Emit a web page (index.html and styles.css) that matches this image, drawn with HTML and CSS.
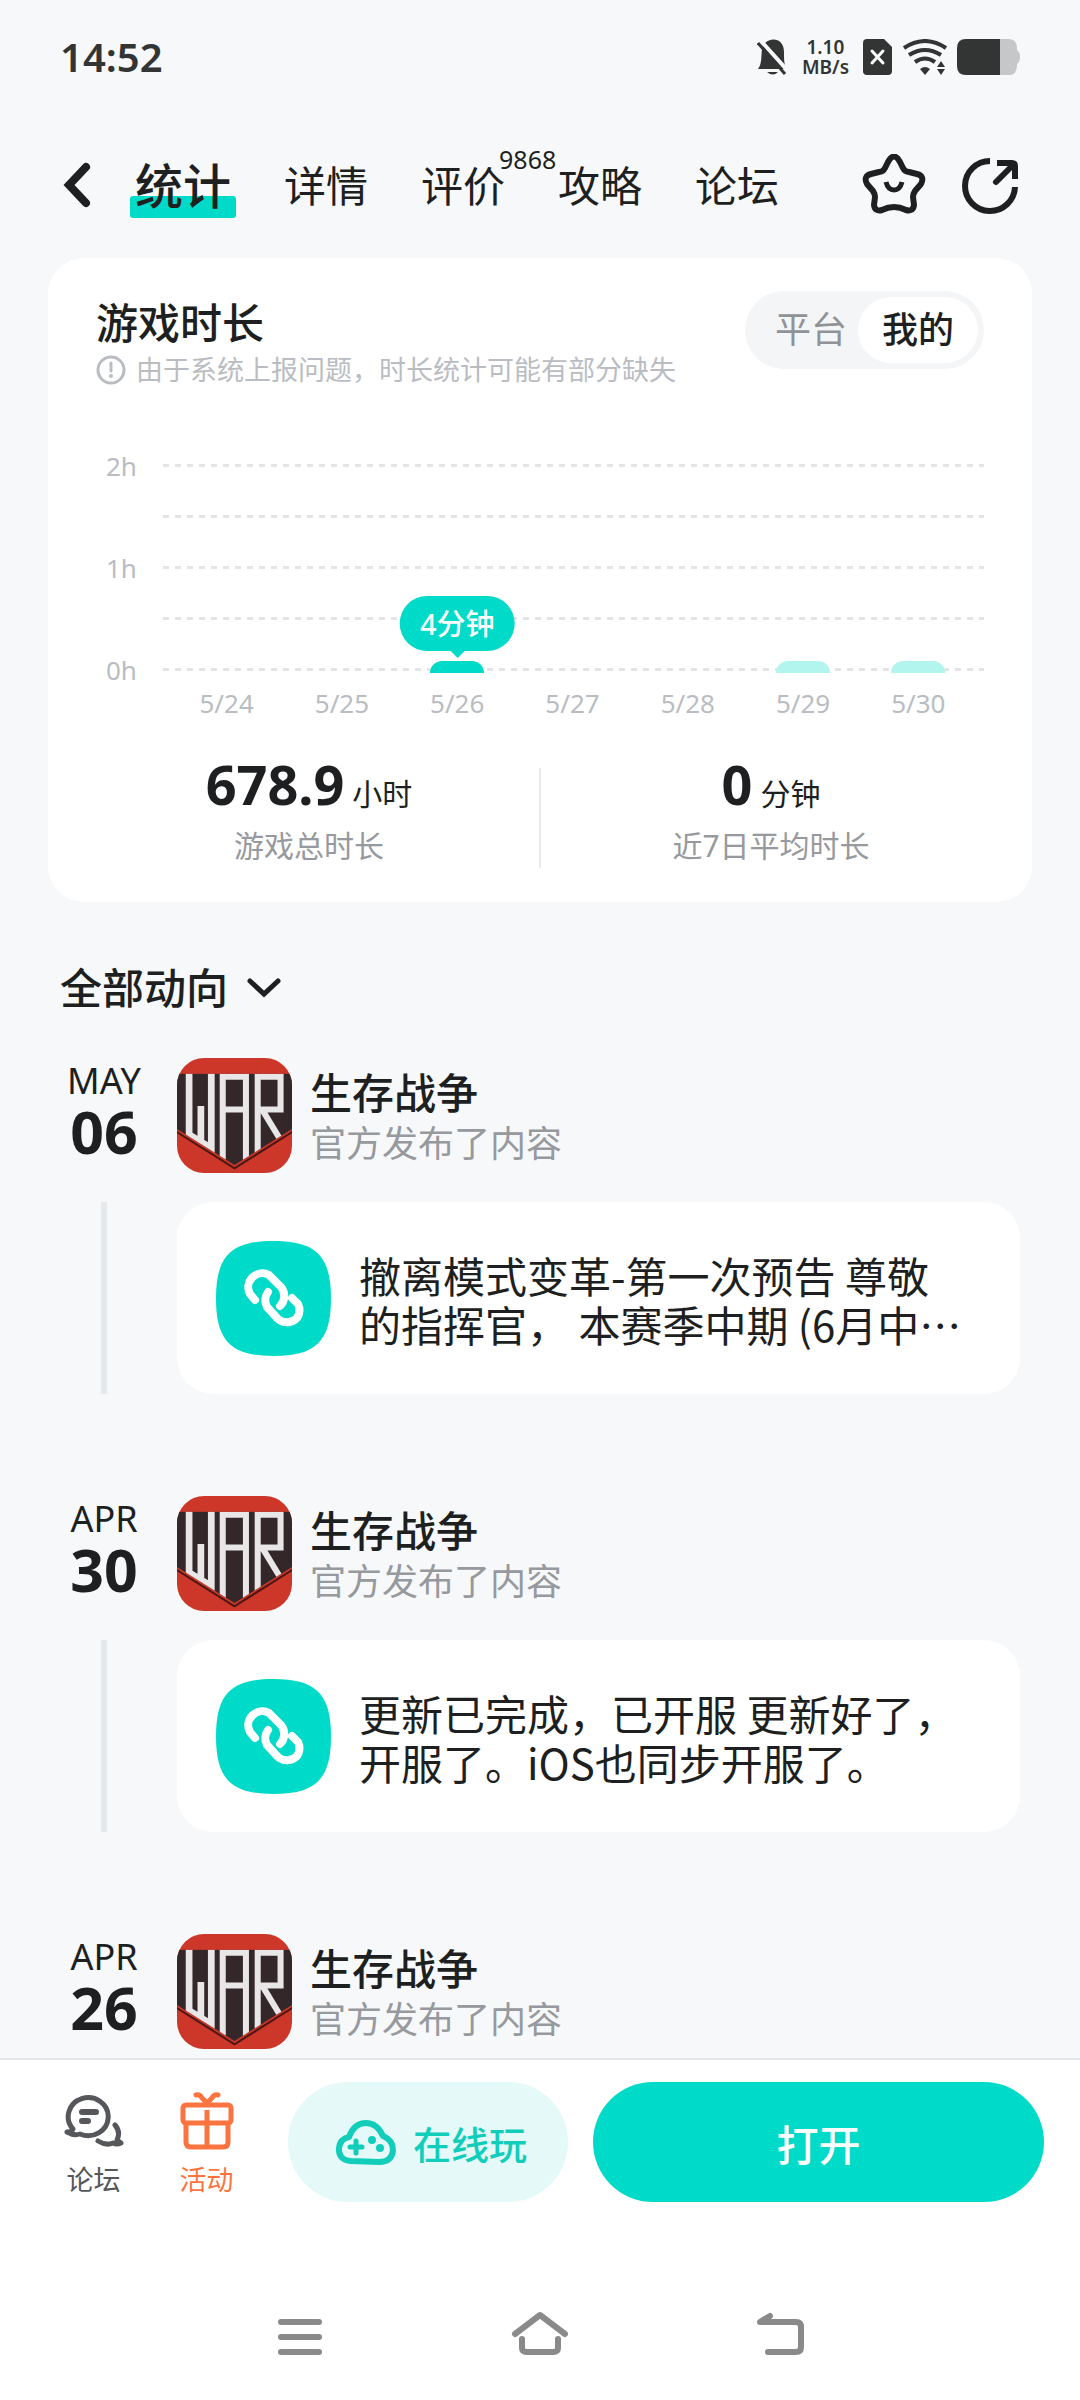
FILE: index.html
```html
<!DOCTYPE html>
<html lang="zh-CN">
<head>
<meta charset="utf-8">
<meta name="viewport" content="width=device-width, initial-scale=1">
<title>生存战争 - 统计</title>
<link rel="stylesheet" href="styles.css">
</head>
<body>
<svg class="sprite" aria-hidden="true">
  <symbol id="war" viewBox="0 0 342 342">
    <clipPath id="shield"><path d="M0 46H342V211L171 318L0 211Z"/></clipPath>
    <rect width="342" height="342" fill="#cc3729"/>
    <g clip-path="url(#shield)">
      <rect y="46" width="342" height="290" fill="#33272a"/>
      <g fill="none" stroke="#e8e6e6" stroke-width="18">
        <path d="M36 46V228L102 268V46M71 143V249" stroke-width="20"/>
        <path d="M136 340V56H205V340M136 153H205"/>
        <path d="M240 340V56H308V153H240M256 158L308 244"/>
      </g>
    </g>
    <path d="M-4 218L171 328L346 218" fill="none" stroke="#4a1714" stroke-width="6"/>
  </symbol>
  <symbol id="link" viewBox="0 0 115 115">
    <path d="M57.500 0C100 0 115 15 115 57.500S100 115 57.500 115S0 100 0 57.500S15 0 57.500 0Z" fill="#00dac8"/>
    <g fill="none" stroke="#fff" stroke-width="8" stroke-linecap="round" stroke-linejoin="round">
      <path d="M39 59L34 53A14 14 0 0 1 53 34L65 46A14 14 0 0 1 64 65"/>
      <path d="M52 51A14 14 0 0 0 51 66L62 78A14 14 0 0 0 81 77A14 14 0 0 0 82 63L76 57"/>
    </g>
  </symbol>
</svg>
<div class="app">
  <div class="status">
    <time class="clock">14:52</time>
    <div class="status-icons">
      <svg class="bell" viewBox="0 0 31 36"><path d="M8 4C14-2 27-1 27 13C27 22 27 25 30 30H1C5 25 4 18 5 10Z" fill="#333535"/><path d="M10 33H21Q16 38 10 33Z" fill="#333535"/><path d="M4 2L31 32" stroke="#f6f8fa" stroke-width="4"/><path d="M1 4L28 35" stroke="#333535" stroke-width="3"/></svg>
      <div class="speed"><span>1.10</span><span>MB/s</span></div>
      <svg class="sim" viewBox="0 0 29 36"><path d="M4 0H21L29 8V32Q29 36 25 36H4Q0 36 0 32V4Q0 0 4 0Z" fill="#333535"/><path d="M9 12L20 24M20 12L9 24" stroke="#fff" stroke-width="3" stroke-linecap="round"/></svg>
      <svg class="wifi" viewBox="0 0 44 36"><g fill="none" stroke="#333535" stroke-width="4"><path d="M1 9Q22-5 43 9"/><path d="M6 16Q22 6 38 16"/><path d="M12 23Q22 16 32 23"/></g><path d="M17 30Q22 26 27 30L22 36ZM34 28L38 22L42 28ZM34 30H42L38 36Z" fill="#333535"/></svg>
      <svg class="battery" viewBox="0 0 63 36"><path d="M43 0H52Q60 0 60 10V11Q63 13 63 18T60 25V26Q60 36 52 36H43Z" fill="#c6c7c9"/><path d="M9 0H43V36H9Q0 36 0 27V9Q0 0 9 0Z" fill="#333535"/></svg>
    </div>
  </div>

  <header class="topbar">
    <button class="icon-btn" type="button" aria-label="返回"><svg width="32" height="48" viewBox="0 0 32 48"><path d="M26 5L9 23L26 41" fill="none" stroke="#1d1f20" stroke-width="8" stroke-linecap="round"/></svg></button>
    <nav class="tabs">
      <a class="tab tab-active" href="#stats" aria-current="page">统计</a>
      <a class="tab" href="#details">详情</a>
      <a class="tab" href="#reviews">评价<sup class="count">9868</sup></a>
      <a class="tab" href="#guides">攻略</a>
      <a class="tab" href="#forum">论坛</a>
    </nav>
    <div class="tools">
      <button class="icon-btn" type="button" aria-label="收藏"><svg width="64" height="64" viewBox="0 0 64 64"><g fill="none" stroke="#1d1f20" stroke-width="6" stroke-linejoin="round"><path d="M26 8Q32-3 38 8L41 14Q43 18 47 18L55 20Q63 22 59 30L53 37Q51 40 51 43L52 51Q51 58 44 56Q32 50 20 56Q13 58 12 51L13 43Q13 40 11 37L5 30Q1 22 9 20L17 18Q21 18 23 14Z"/><path d="M24 28Q26 36 32 36T40 28" stroke-width="5"/></g></svg></button>
      <button class="icon-btn" type="button" aria-label="分享"><svg width="64" height="64" viewBox="0 0 64 64"><g fill="none" stroke="#1d1f20" stroke-width="6"><path d="M32 7A25 25 0 1 0 57 33"/><path d="M38 28L55 11" stroke-linecap="round"/><path d="M39 9H54Q57 9 57 12V25"/></g></svg></button>
    </div>
  </header>

  <main class="content">
    <section class="panel">
      <div class="panel-head">
        <div class="panel-title">
          <h1>游戏时长</h1>
          <p class="notice"><svg width="30" height="30" viewBox="0 0 30 30"><circle cx="15" cy="15" r="13" fill="none" stroke="#b9bdc2" stroke-width="3"/><path d="M15 8V16" stroke="#b9bdc2" stroke-width="3" stroke-linecap="round"/><circle cx="15" cy="21" r="2" fill="#b9bdc2"/></svg>由于系统上报问题，时长统计可能有部分缺失</p>
        </div>
        <div class="switch" role="group" aria-label="统计范围">
          <button type="button" aria-pressed="false">平台</button>
          <button type="button" aria-pressed="true">我的</button>
        </div>
      </div>

      <div class="chart">
        <div class="gridlines">
          <div class="gridline"><span>2h</span><i></i></div>
          <div class="gridline"><span></span><i></i></div>
          <div class="gridline"><span>1h</span><i></i></div>
          <div class="gridline"><span></span><i></i></div>
          <div class="gridline"><span>0h</span><i></i></div>
        </div>
        <ol class="days">
          <li>5/24</li>
          <li>5/25</li>
          <li><div class="bar bar-on"><span class="tip">4分钟</span></div>5/26</li>
          <li>5/27</li>
          <li>5/28</li>
          <li><div class="bar"></div>5/29</li>
          <li><div class="bar"></div>5/30</li>
        </ol>
      </div>

      <div class="totals">
        <div class="total"><p class="value"><strong>678.9</strong>小时</p><p class="label">游戏总时长</p></div>
        <div class="total"><p class="value"><strong>0</strong>分钟</p><p class="label">近7日平均时长</p></div>
      </div>
    </section>

    <button class="filter" type="button">全部动向<svg width="36" height="24" viewBox="0 0 36 24"><path d="M4 5L18 18L32 5" fill="none" stroke="#1d1f20" stroke-width="5" stroke-linecap="round"/></svg></button>

    <div class="timeline">
      <article class="entry">
        <time class="date">MAY<b>06</b></time>
        <div class="who">
          <svg class="game" role="img" aria-label="生存战争"><use href="#war"/></svg>
          <div class="who-text"><h2>生存战争</h2><p>官方发布了内容</p></div>
        </div>
        <div class="rail"></div>
        <a class="post" href="#post-0506"><svg class="badge" aria-hidden="true"><use href="#link"/></svg><p>撤离模式变革-第一次预告 尊敬的指挥官， 本赛季中期 (6月中…</p></a>
      </article>
      <article class="entry">
        <time class="date">APR<b>30</b></time>
        <div class="who">
          <svg class="game" role="img" aria-label="生存战争"><use href="#war"/></svg>
          <div class="who-text"><h2>生存战争</h2><p>官方发布了内容</p></div>
        </div>
        <div class="rail"></div>
        <a class="post" href="#post-0430"><svg class="badge" aria-hidden="true"><use href="#link"/></svg><p>更新已完成，已开服 更新好了，开服了。iOS也同步开服了。</p></a>
      </article>
      <article class="entry">
        <time class="date">APR<b>26</b></time>
        <div class="who">
          <svg class="game" role="img" aria-label="生存战争"><use href="#war"/></svg>
          <div class="who-text"><h2>生存战争</h2><p>官方发布了内容</p></div>
        </div>
      </article>
    </div>
  </main>

  <footer class="bottom">
    <div class="actions">
      <div class="shortcuts">
        <a class="shortcut" href="#forum"><svg width="60" height="60" viewBox="0 0 60 60"><g fill="none" stroke="#55575b" stroke-linecap="round" stroke-linejoin="round"><path d="M3 42Q8 42 9 39A20 19 0 1 1 16 44Q10 46 3 42Z" stroke-width="5"/><path d="M18 22H32M18 31H24" stroke-width="6"/><path d="M51 35Q57 42 53 50L57 53Q53 55 49 53Q42 56 34 51" stroke-width="5"/></g></svg>论坛</a>
        <a class="shortcut shortcut-hot" href="#events"><svg width="60" height="60" viewBox="0 0 60 60"><g fill="none" stroke="#fb7440" stroke-width="5" stroke-linejoin="round"><rect x="6" y="15" width="48" height="18" rx="3"/><path d="M9 33V52Q9 57 14 57H46Q51 57 51 52V33M30 20V57"/><path d="M19 5Q23 4 25 8L30 13L35 8Q37 4 41 5" stroke-linecap="round"/></g></svg>活动</a>
      </div>
      <button class="pill pill-soft" type="button"><svg width="62" height="48" viewBox="0 0 62 48"><path d="M16 43Q3 42 4 30Q5 21 14 19Q19 5 31 5Q42 5 48 18Q58 22 58 32Q57 44 44 44Z" fill="none" stroke="#12cdb9" stroke-width="6" stroke-linejoin="round"/><path d="M15 29H27M21 23V35" stroke="#12cdb9" stroke-width="5" stroke-linecap="round"/><circle cx="37" cy="22" r="4" fill="#12cdb9"/><circle cx="45" cy="30" r="4" fill="#12cdb9"/></svg>在线玩</button>
      <button class="pill pill-main" type="button">打开</button>
    </div>
    <nav class="sysnav">
      <button class="icon-btn" type="button" aria-label="最近任务"><svg width="60" height="60" viewBox="0 0 60 60"><path d="M11 17H49M11 32H49M11 47H49" stroke="#8a8a8a" stroke-width="6" stroke-linecap="round"/></svg></button>
      <button class="icon-btn" type="button" aria-label="主屏幕"><svg width="60" height="60" viewBox="0 0 60 60"><path d="M5 29L30 10L55 29M12 34V43Q12 47 17 47H43Q48 47 48 43V34" fill="none" stroke="#8a8a8a" stroke-width="6" stroke-linecap="round" stroke-linejoin="round"/></svg></button>
      <button class="icon-btn" type="button" aria-label="返回上一页"><svg width="60" height="60" viewBox="0 0 60 60"><path d="M18 47H46Q51 47 51 42V22Q51 17 46 17H10L20 11" fill="none" stroke="#8a8a8a" stroke-width="6" stroke-linecap="round" stroke-linejoin="round"/></svg></button>
    </nav>
  </footer>
</div>
</body>
</html>
```

FILE: styles.css
```css
* {
  box-sizing: border-box;
  margin: 0;
  padding: 0;
}

body {
  background: #f6f8fa;
  color: #1d1f20;
  font-family: "Noto Sans", "Noto Sans CJK SC", sans-serif;
}

button {
  border: 0;
  background: none;
  color: inherit;
  font: inherit;
  cursor: pointer;
}

a {
  color: inherit;
  text-decoration: none;
}

svg {
  display: block;
  flex: none;
}

.sprite {
  position: absolute;
  width: 0;
  height: 0;
}

.app {
  display: flex;
  flex-direction: column;
  height: 100vh;
}

/* Status bar */
.status {
  display: flex;
  flex: none;
  align-items: center;
  justify-content: space-between;
  height: 114px;
  padding: 0 60px;
  color: #333535;
}

.clock {
  font-size: 40px;
  font-weight: 600;
  line-height: 48px;
}

.status-icons {
  display: flex;
  align-items: center;
}

.bell {
  width: 31px;
  height: 36px;
}

.speed {
  display: flex;
  flex-direction: column;
  align-items: center;
  margin: 0 14px;
  font-size: 19px;
  font-weight: 600;
  line-height: 20px;
}

.sim {
  width: 29px;
  height: 36px;
  margin-right: 11px;
}

.wifi {
  width: 44px;
  height: 36px;
  margin-right: 10px;
}

.battery {
  width: 63px;
  height: 36px;
}

/* Top bar */
.topbar {
  display: flex;
  flex: none;
  align-items: center;
  height: 144px;
  padding: 0 58px 0 60px;
}

.tabs {
  display: flex;
  flex: 1;
  align-items: center;
  gap: 53px;
  margin-left: 43px;
}

.tab {
  position: relative;
  font-size: 42px;
  line-height: 64px;
}

.tab-active {
  z-index: 0;
  font-size: 48px;
  font-weight: 500;
}

.tab-active::before {
  position: absolute;
  z-index: -1;
  right: -5px;
  bottom: 0;
  left: -5px;
  height: 22px;
  border-radius: 3px;
  background: #00dac8;
  content: "";
}

.count {
  position: absolute;
  top: -10px;
  left: 78px;
  font-size: 25px;
  line-height: 30px;
}

.tools {
  display: flex;
  gap: 32px;
}

/* Play time panel */
.content {
  flex: 1;
  min-height: 0;
  overflow: hidden;
}

.panel {
  margin: 0 48px;
  padding: 33px 48px 34px;
  border-radius: 36px;
  background: #fff;
}

.panel-head {
  display: flex;
  align-items: flex-start;
  justify-content: space-between;
}

.panel-title {
  padding-top: 11px;
}

.panel-title h1 {
  font-size: 42px;
  font-weight: 500;
  line-height: 42px;
}

.notice {
  display: flex;
  gap: 10px;
  margin-top: 11px;
  color: #b9bdc2;
  font-size: 27px;
  line-height: 30px;
}

.switch {
  display: flex;
  padding: 6px;
  border-radius: 40px;
  background: #f4f5f7;
}

.switch button {
  height: 66px;
  padding: 0 11px 0 24px;
  border-radius: 33px;
  color: #8f9296;
  font-size: 36px;
  line-height: 66px;
}

.switch button[aria-pressed="true"] {
  padding: 0 24px;
  background: #fff;
  color: #1d1f20;
  font-weight: 500;
}

.chart {
  display: grid;
  margin-top: 55px;
  color: #b9bdc2;
  font-size: 26px;
  line-height: 30px;
}

.gridlines,
.days {
  grid-area: 1 / 1;
}

.gridlines {
  padding-bottom: 23px;
}

.gridline {
  display: flex;
  align-items: center;
  height: 51px;
}

.gridline span {
  width: 67px;
  padding-left: 10px;
}

.gridline i {
  flex: 1;
  height: 3px;
  background: repeating-linear-gradient(to right, #e4e5e6 0 6px, transparent 6px 12px);
}

.days {
  display: grid;
  grid-template-columns: repeat(7, 1fr);
  align-items: end;
  align-self: end;
  padding: 0 8px 0 73px;
  list-style: none;
  text-align: center;
}

.bar {
  position: relative;
  width: 54px;
  height: 12px;
  margin: 0 auto 15px;
  border-radius: 12px 12px 0 0;
  background: #b2f4ee;
}

.bar-on {
  background: #00dac8;
}

.tip {
  position: absolute;
  bottom: 22px;
  left: 50%;
  padding: 0 20px;
  border-radius: 28px;
  background: #00dac8;
  color: #fff;
  font-size: 29px;
  font-weight: 500;
  line-height: 55px;
  white-space: nowrap;
  transform: translateX(-50%);
}

.tip::after {
  position: absolute;
  top: 100%;
  left: 50%;
  margin: -1px 0 0 -8px;
  border: 8px solid transparent;
  border-top-color: #00dac8;
  border-bottom: 0;
  content: "";
}

.totals {
  display: grid;
  grid-template-columns: 1fr 1fr;
  margin: 40px -18px 0;
  background: linear-gradient(#e8eaec, #e8eaec) center bottom / 2px 100px no-repeat;
  text-align: center;
}

.value {
  font-size: 30px;
  line-height: 30px;
}

.value strong {
  margin-right: 8px;
  font-size: 54px;
  font-weight: 700;
  line-height: 52px;
}

.label {
  padding: 21px 0 7px;
  color: #96999e;
  font-size: 30px;
  line-height: 30px;
}

/* Activity feed */
.filter {
  display: flex;
  align-items: center;
  gap: 18px;
  margin: 65px 60px 49px;
  font-size: 42px;
  font-weight: 500;
  line-height: 42px;
}

.timeline {
  display: flex;
  flex-direction: column;
  gap: 102px;
  padding: 0 60px;
}

.entry {
  display: grid;
  grid-template-columns: 88px 1fr;
  gap: 29px;
}

.date {
  display: flex;
  flex-direction: column;
  align-items: center;
  padding-top: 2px;
  font-size: 36px;
  line-height: 42px;
}

.date b {
  font-size: 59px;
  line-height: 58px;
}

.who {
  display: flex;
  align-items: center;
  gap: 18px;
}

.game {
  width: 115px;
  height: 115px;
  border-radius: 27px;
}

.who-text {
  padding-top: 4px;
}

.who h2 {
  font-size: 42px;
  font-weight: 500;
  line-height: 52px;
}

.who p {
  color: #96999e;
  font-size: 36px;
  line-height: 50px;
}

.rail {
  justify-self: center;
  width: 6px;
  background: #e5e9ec;
}

.post {
  display: flex;
  align-items: center;
  gap: 28px;
  padding: 39px 56px 38px 39px;
  border-radius: 36px;
  background: #fff;
}

.badge {
  width: 115px;
  height: 115px;
}

.post p {
  font-family: "Noto Sans CJK SC", sans-serif;
  font-size: 42px;
  line-height: 49px;
}

/* Bottom bar */
.bottom {
  flex: none;
  border-top: 2px solid #e5e8eb;
  background: #fff;
}

.actions {
  display: flex;
  gap: 25px;
  padding: 22px 36px 0 37px;
}

.shortcuts {
  display: grid;
  grid-template-columns: 113px 113px;
}

.shortcut {
  display: flex;
  flex-direction: column;
  align-items: center;
  gap: 15px;
  padding-top: 8px;
  color: #55575b;
  font-size: 27px;
  line-height: 30px;
}

.shortcut-hot {
  color: #fb7440;
}

.pill {
  display: flex;
  align-items: center;
  justify-content: center;
  gap: 16px;
  height: 120px;
  border-radius: 60px;
  font-weight: 500;
}

.pill-soft {
  padding: 0 41px 0 47px;
  background: #e4f9f8;
  color: #12cdb9;
  font-size: 38px;
}

.pill-main {
  flex: 1;
  background: #00dac8;
  color: #fff;
  font-size: 42px;
}

.sysnav {
  display: flex;
  justify-content: center;
  gap: 180px;
  padding: 103px 0 35px;
}
```
